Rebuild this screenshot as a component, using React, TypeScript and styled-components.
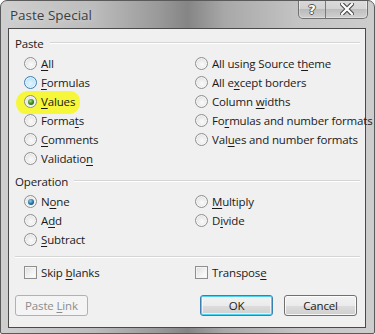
import React from "react";
import styled, { createGlobalStyle } from "styled-components";

const GlobalStyle = createGlobalStyle`
  html, body {
    margin: 0;
    padding: 0;
    background: #ffffff;
  }
  body {
    font-family: "Open Sans", "Noto Sans", "DejaVu Sans", sans-serif;
    font-size: 11.5px;
    letter-spacing: -0.15px;
    color: #1a1a1a;
  }
`;

const Window = styled.div`
  width: 375px;
  height: 334px;
  box-sizing: border-box;
  display: flex;
  flex-direction: column;
  border: 1px solid #5a5a5a;
  border-radius: 7px 7px 2px 2px;
  background: linear-gradient(
    90deg,
    #cfcfcf 0%,
    #bcbcbc 25%,
    #9a9a9a 42%,
    #858585 50%,
    #a8a8a8 60%,
    #c4c4c4 80%,
    #cdcdcd 100%
  );
  overflow: hidden;
`;

const TitleBar = styled.div`
  height: 27px;
  display: flex;
  justify-content: space-between;
  align-items: flex-start;
  padding-left: 9px;
`;

const Title = styled.span`
  margin-top: 5px;
  font-size: 13.5px;
  letter-spacing: 0;
  color: #3e3e3e;
  text-shadow: 0 0 6px rgba(255, 255, 255, 0.6);
`;

const Captions = styled.div`
  display: flex;
  margin-right: 6px;
  margin-top: -1px;
  border: 1px solid #707070;
  border-top: none;
  border-radius: 0 0 5px 5px;
  overflow: hidden;
  box-shadow: inset 0 0 0 1px rgba(255, 255, 255, 0.45);
`;

const CaptionButton = styled.div<{ $wide?: boolean }>`
  width: ${(p) => (p.$wide ? 41 : 26)}px;
  height: 18px;
  display: flex;
  align-items: center;
  justify-content: center;
  background: linear-gradient(
    180deg,
    rgba(255, 255, 255, 0.35) 0%,
    rgba(255, 255, 255, 0.2) 50%,
    rgba(160, 160, 160, 0.3) 51%,
    rgba(220, 220, 220, 0.4) 100%
  );
  & + & {
    border-left: 1px solid #7a7a7a;
  }
`;

const HelpGlyph = styled.span`
  font-family: "DejaVu Sans", sans-serif;
  font-weight: bold;
  font-size: 13px;
  color: #fff;
  text-shadow: -1px 0 #555, 1px 0 #555, 0 -1px #555, 0 1px #555;
`;

const Client = styled.div`
  flex: 1;
  margin: 0 8px 5px 7px;
  border: 1px solid #4a4a4a;
  background: #f0f0f0;
  display: flex;
  flex-direction: column;
  padding: 7px 5px 9px 6px;
`;

const GroupHeader = styled.div<{ $gap: number }>`
  display: flex;
  align-items: center;
  height: 14px;
  margin-top: ${(p) => p.$gap}px;
  gap: 6px;
  &::after {
    content: "";
    flex: 1;
    height: 0;
    border-top: 1px solid #d5d5d5;
    border-bottom: 1px solid #ffffff;
  }
`;

const OptionGrid = styled.div<{ $rows: number }>`
  display: grid;
  grid-template-columns: 171px 1fr;
  grid-template-rows: repeat(${(p) => p.$rows}, 19px);
  grid-auto-flow: column;
  margin-top: 4px;
  padding-left: 9px;
`;

const Option = styled.label`
  position: relative;
  display: flex;
  align-items: center;
  gap: 4px;
  white-space: nowrap;
`;

const Highlight = styled.span`
  position: absolute;
  left: -8px;
  top: -1px;
  width: 64px;
  height: 23px;
  background: #f6f63a;
  border-radius: 12px 10px 11px 9px / 12px 10px 11px 11px;
`;

const Radio = styled.span<{ $state?: "checked" | "hover" | "selected" }>`
  position: relative;
  width: 13px;
  height: 13px;
  box-sizing: border-box;
  border-radius: 50%;
  border: 1px solid ${(p) => (p.$state === "hover" ? "#3c7fb1" : "#8f8f8f")};
  background: ${(p) =>
    p.$state === "hover"
      ? "radial-gradient(circle at 50% 60%, #e6f6ff 0%, #bfe6fb 55%, #9ed2f0 100%)"
      : "radial-gradient(circle at 55% 60%, #fbfbfb 0%, #e8e8e8 55%, #cfcfcf 100%)"};
  box-shadow: inset 0 0 0 1px rgba(255, 255, 255, 0.7);
  flex-shrink: 0;
  &::after {
    content: "";
    display: ${(p) => (p.$state === "checked" || p.$state === "selected" ? "block" : "none")};
    position: absolute;
    left: 2.5px;
    top: 2.5px;
    width: 6px;
    height: 6px;
    border-radius: 50%;
    background: ${(p) =>
      p.$state === "checked"
        ? "radial-gradient(circle at 40% 35%, #a8e07a 0%, #3c8a1c 50%, #1f4f10 100%)"
        : "radial-gradient(circle at 40% 35%, #8ed0f0 0%, #1e6fa0 55%, #0c3c5a 100%)"};
  }
`;

const Box = styled.span`
  width: 13px;
  height: 13px;
  box-sizing: border-box;
  border: 1px solid #8f8f8f;
  background: linear-gradient(135deg, #dcdcdc 0%, #f4f4f4 60%, #ffffff 100%);
  box-shadow: inset 0 0 0 1px #f4f4f4;
  flex-shrink: 0;
`;

const Text = styled.span`
  position: relative;
  color: inherit;
`;

const U = styled.span`
  text-decoration: underline;
  text-underline-offset: 2px;
`;

const Separator = styled.div`
  margin: 7px 0 0 0;
  border-top: 1px solid #d5d5d5;
  border-bottom: 1px solid #ffffff;
`;

const CheckRow = styled(OptionGrid)`
  margin-top: 5px;
  padding-left: 9px;
`;

const ButtonRow = styled.div`
  display: flex;
  margin-top: 13px;
  padding-right: 3px;
  gap: 11px;
`;

const Button = styled.div<{ $kind?: "default" | "disabled" }>`
  width: 73px;
  height: 21px;
  box-sizing: border-box;
  display: flex;
  align-items: center;
  justify-content: center;
  border-radius: 3px;
  border: 1px solid
    ${(p) => (p.$kind === "default" ? "#3c7fb1" : p.$kind === "disabled" ? "#adb2b5" : "#707070")};
  color: ${(p) => (p.$kind === "disabled" ? "#8d8d8d" : "#1a1a1a")};
  background: ${(p) =>
    p.$kind === "disabled"
      ? "#f4f4f4"
      : "linear-gradient(180deg, #f2f2f2 0%, #ebebeb 50%, #dddddd 51%, #cfcfcf 100%)"};
  box-shadow: ${(p) =>
    p.$kind === "default"
      ? "inset 0 0 0 1px #48d5f3, inset 0 0 0 2px rgba(255,255,255,0.6)"
      : p.$kind === "disabled"
      ? "none"
      : "inset 0 0 0 1px rgba(255,255,255,0.8)"};
  &:first-child {
    margin-right: auto;
  }
`;

type Opt = { pre: string; key: string; post: string; state?: "checked" | "hover" | "selected"; mark?: boolean };

const pasteOptions: Opt[] = [
  { pre: "", key: "A", post: "ll" },
  { pre: "", key: "F", post: "ormulas", state: "hover" },
  { pre: "", key: "V", post: "alues", state: "checked", mark: true },
  { pre: "Forma", key: "t", post: "s" },
  { pre: "", key: "C", post: "omments" },
  { pre: "Validatio", key: "n", post: "" },
  { pre: "All using Source t", key: "h", post: "eme" },
  { pre: "All e", key: "x", post: "cept borders" },
  { pre: "Column ", key: "w", post: "idths" },
  { pre: "Fo", key: "r", post: "mulas and number formats" },
  { pre: "Val", key: "u", post: "es and number formats" },
  { pre: "", key: "", post: "" },
];

const opOptions: Opt[] = [
  { pre: "N", key: "o", post: "ne", state: "selected" },
  { pre: "A", key: "d", post: "d" },
  { pre: "", key: "S", post: "ubtract" },
  { pre: "", key: "M", post: "ultiply" },
  { pre: "D", key: "i", post: "vide" },
  { pre: "", key: "", post: "" },
];

const Label = ({ o }: { o: Opt }) => (
  <Text>
    {o.pre}
    {o.key && <U>{o.key}</U>}
    {o.post}
  </Text>
);

const RadioOption = ({ o }: { o: Opt }) => {
  if (!o.pre && !o.key && !o.post) return <span />;
  return (
    <Option>
      {o.mark && <Highlight />}
      <Radio $state={o.state} />
      <Label o={o} />
    </Option>
  );
};

const HelpIcon = () => <HelpGlyph>?</HelpGlyph>;

const CloseIcon = () => (
  <svg width="14" height="12" viewBox="0 0 14 12">
    <path d="M2 1 L12 11 M12 1 L2 11" stroke="#4a4a4a" strokeWidth="4.4" strokeLinecap="square" />
    <path d="M2 1 L12 11 M12 1 L2 11" stroke="#ffffff" strokeWidth="2.2" strokeLinecap="square" />
  </svg>
);

export default function App() {
  return (
    <>
      <GlobalStyle />
      <Window>
        <TitleBar>
          <Title>Paste Special</Title>
          <Captions>
            <CaptionButton>
              <HelpIcon />
            </CaptionButton>
            <CaptionButton $wide>
              <CloseIcon />
            </CaptionButton>
          </Captions>
        </TitleBar>
        <Client>
          <GroupHeader $gap={0}>Paste</GroupHeader>
          <OptionGrid $rows={6}>
            {pasteOptions.map((o, i) => (
              <RadioOption key={i} o={o} />
            ))}
          </OptionGrid>
          <GroupHeader $gap={6}>Operation</GroupHeader>
          <OptionGrid $rows={3}>
            {opOptions.map((o, i) => (
              <RadioOption key={i} o={o} />
            ))}
          </OptionGrid>
          <Separator />
          <CheckRow $rows={1}>
            <Option>
              <Box />
              <Text>
                Skip <U>b</U>lanks
              </Text>
            </Option>
            <Option>
              <Box />
              <Text>
                Transpos<U>e</U>
              </Text>
            </Option>
          </CheckRow>
          <ButtonRow>
            <Button $kind="disabled">
              <Text>
                Paste <U>L</U>ink
              </Text>
            </Button>
            <Button $kind="default">
              <Text>OK</Text>
            </Button>
            <Button>
              <Text>Cancel</Text>
            </Button>
          </ButtonRow>
        </Client>
      </Window>
    </>
  );
}
